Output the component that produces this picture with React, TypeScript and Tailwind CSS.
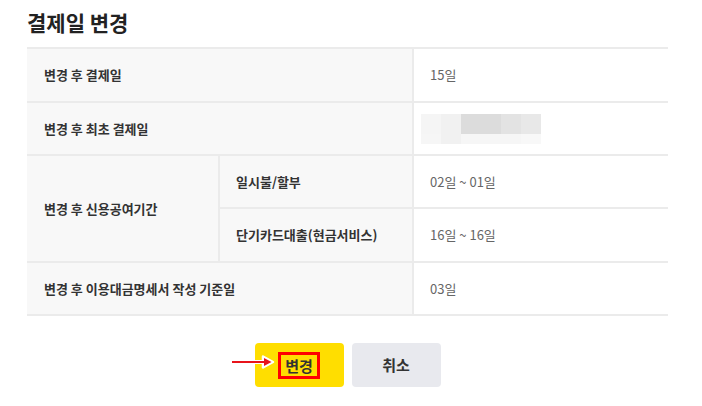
import React from 'react';

const font = { fontFamily: '"Noto Sans CJK KR", "Noto Sans", sans-serif' };

const Label: React.FC<{ children: React.ReactNode; className?: string }> = ({ children, className = '' }) => (
  <div className={`flex items-center bg-[#f8f8f8] border-b-2 border-[#ebebeb] text-[13px] font-bold text-[#333] ${className}`}>
    {children}
  </div>
);

const Value: React.FC<{ children?: React.ReactNode; pad?: string }> = ({ children, pad = 'pl-[16px]' }) => (
  <div className={`flex items-center border-b-2 border-l-2 border-[#ebebeb] text-[13px] text-[#666] ${pad}`}>
    {children}
  </div>
);

export default function App() {
  return (
    <div className="w-[702px] h-[406px] bg-white overflow-hidden" style={font}>
      <div className="pl-[27px] w-[668px]">
        {/* Title */}
        <h1 className="pt-[5px] text-[21px] leading-[34px] font-bold text-[#222]">결제일 변경</h1>

        {/* Table */}
        <div className="mt-[8px] grid grid-cols-[193px_192px_256px] grid-rows-[54px_53px_53px_54px_53px] border-t-2 border-[#ebebeb]">
          <Label className="col-span-2 pl-[17px]">변경 후 결제일</Label>
          <Value>15일</Value>

          <Label className="col-span-2 pl-[17px]">변경 후 최초 결제일</Label>
          <Value pad="pl-[7px]">
            {/* blurred value */}
            <div className="flex flex-col">
              <div className="flex h-[20px]">
                <div className="w-[20px] bg-[#f5f5f5]" />
                <div className="w-[20px] bg-[#f1f1f1]" />
                <div className="w-[40px] bg-[#dcdcdc]" />
                <div className="w-[20px] bg-[#e3e3e3]" />
                <div className="w-[20px] bg-[#e8e8e8]" />
              </div>
              <div className="flex h-[10px]">
                <div className="w-[20px] bg-[#f6f6f6]" />
                <div className="w-[20px] bg-[#f1f1f1]" />
                <div className="w-[60px] bg-[#f6f6f6]" />
                <div className="w-[20px] bg-[#f8f8f8]" />
              </div>
            </div>
          </Value>

          <Label className="row-span-2 pl-[17px] border-r-2">변경 후 신용공여기간</Label>
          <Label className="pl-[16px]">일시불/할부</Label>
          <Value>02일 ~ 01일</Value>
          <Label className="pl-[16px]">단기카드대출(현금서비스)</Label>
          <Value>16일 ~ 16일</Value>

          <Label className="col-span-2 pl-[17px]">변경 후 이용대금명세서 작성 기준일</Label>
          <Value>03일</Value>
        </div>

        {/* Buttons */}
        <div className="mt-[27px] flex justify-center gap-[8px]">
          <div className="relative">
            <button
              type="button"
              className="w-[89px] h-[44px] rounded-[4px] bg-[#ffde00] flex items-center justify-center"
            >
              <span className="border-[3px] border-[#ff0000] px-[4px] h-[27px] leading-[21px] text-[15px] font-bold text-[#333]">
                변경
              </span>
            </button>
            {/* annotation arrow */}
            <svg className="absolute left-[-23px] top-[12px]" width="43" height="14" viewBox="0 0 43 14">
              <path d="M0 7 H34" stroke="#fff" strokeWidth="4" />
              <path d="M31 1.5 L41 7 L31 12.5 Z" fill="#fff" stroke="#fff" strokeWidth="2.5" strokeLinejoin="round" />
              <path d="M0 7 H35" stroke="#e8141b" strokeWidth="2" />
              <path d="M32 3 L39.5 7 L32 11 Z" fill="#e8141b" />
            </svg>
          </div>
          <button
            type="button"
            className="w-[89px] h-[44px] rounded-[4px] bg-[#e8e9ee] text-[15px] font-bold text-[#333]"
          >
            취소
          </button>
        </div>
      </div>
    </div>
  );
}
